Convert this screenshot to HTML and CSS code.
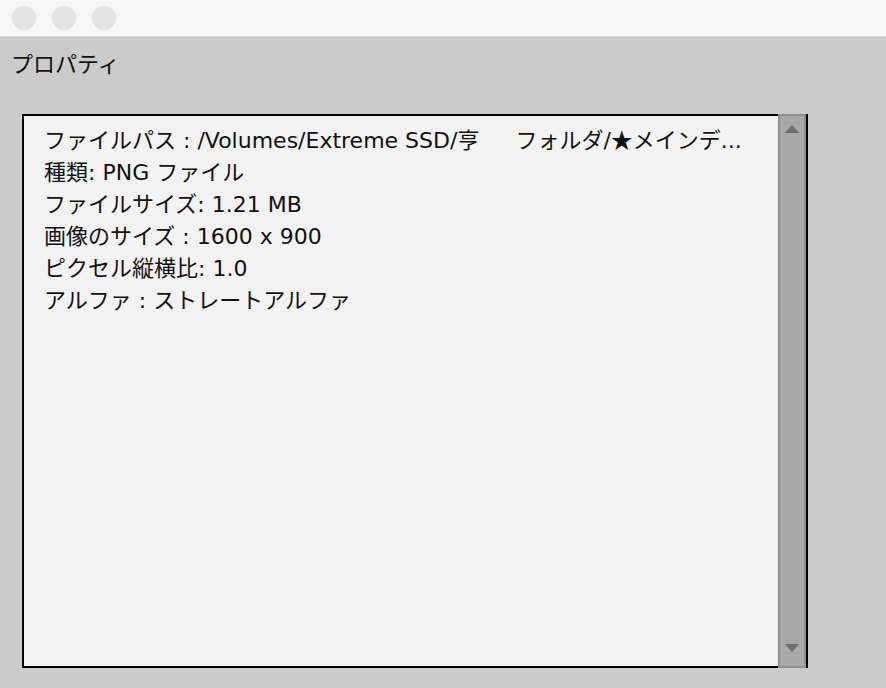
FILE: index.html
```html
<!DOCTYPE html>
<html lang="ja">
<head>
    <meta charset="UTF-8">
    <title>プロパティ</title>
    <link rel="stylesheet" href="styles.css">
</head>
<body>
    <div class="titlebar">
        <span class="light"></span>
        <span class="light"></span>
        <span class="light"></span>
    </div>

    <div class="content">
        <h1 class="heading">プロパティ</h1>

        <div class="panel">
            <div class="info">
                <div class="row">ファイルパス : /Volumes/Extreme SSD/亨　&nbsp;&nbsp;フォルダ/<span class="star">★</span>メインデ...</div>
                <div class="row">種類: PNG ファイル</div>
                <div class="row">ファイルサイズ: 1.21 MB</div>
                <div class="row">画像のサイズ : 1600 x 900</div>
                <div class="row">ピクセル縦横比: 1.0</div>
                <div class="row">アルファ : ストレートアルファ</div>
            </div>
            <div class="scrollbar">
                <span class="arrow up"></span>
                <span class="arrow down"></span>
            </div>
        </div>
    </div>
</body>
</html>
```

FILE: styles.css
```css
html, body {
    margin: 0;
    height: 100%;
}
body {
    background-color: #cbcbcb;
    font-family: "Noto Sans CJK JP", "Liberation Sans", sans-serif;
    color: #111;
    overflow: hidden;
}
.titlebar {
    height: 36px;
    background-color: #f6f6f6;
    border-bottom: 1px solid #dadada;
    display: flex;
    align-items: center;
    gap: 16px;
    padding-left: 12px;
}
.light {
    width: 22px;
    height: 22px;
    border-radius: 50%;
    background-color: #e3e3e3;
    border: 1px solid #d9d9d9;
}
.content {
    padding: 11px 0 0 0;
}
.heading {
    margin: 0 0 38px 11px;
    font-size: 22px;
    font-weight: normal;
    line-height: 28px;
    color: #111;
}
.panel {
    display: flex;
    margin-left: 22px;
    width: 784px;
    height: 554px;
    border-right: 2px solid #000;
}
.info {
    flex: 1;
    background-color: #f2f2f2;
    border: 2px solid #000;
    border-right: none;
    padding: 6px 0 0 20px;
}
.row {
    font-family: "DejaVu Sans", "Noto Sans CJK JP", sans-serif;
    font-size: 22px;
    line-height: 32px;
    white-space: nowrap;
}
.star {
    font-family: "Noto Sans CJK JP", sans-serif;
}
.scrollbar {
    width: 28px;
    box-sizing: border-box;
    background-color: #a8a8a8;
    border: 2px solid #909090;
    display: flex;
    flex-direction: column;
    justify-content: space-between;
    align-items: center;
    padding: 9px 0 14px 0;
}
.arrow {
    width: 0;
    height: 0;
    border-left: 7px solid transparent;
    border-right: 7px solid transparent;
}
.arrow.up {
    border-bottom: 8px solid #6e6e6e;
}
.arrow.down {
    border-top: 8px solid #6e6e6e;
}
```
